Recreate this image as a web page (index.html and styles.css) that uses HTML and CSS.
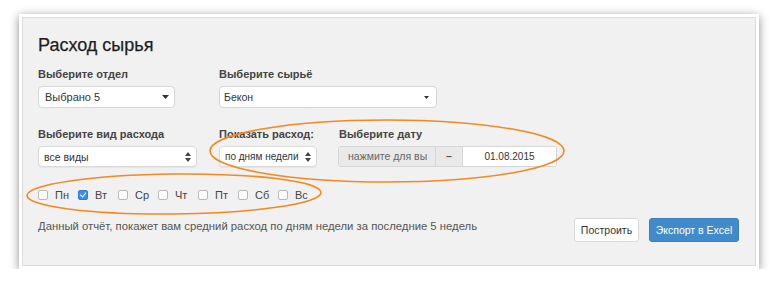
FILE: index.html
```html
<!DOCTYPE html>
<html>
<head>
  <title>Расход сырья</title>
  <meta charset="UTF-8">
  <link rel="stylesheet" href="styles.css">
</head>
<body>
  <div class="window">
    <div class="panel">
      <h1>Расход сырья</h1>

      <div class="row">
        <div class="field col-a">
          <label>Выберите отдел</label>
          <div class="select select-dept">
            <span>Выбрано 5</span>
            <svg class="caret" width="7" height="4" viewBox="0 0 7 4"><path d="M0 0h7L3.5 4z" fill="#333"/></svg>
          </div>
        </div>
        <div class="field">
          <label>Выберите сырьё</label>
          <div class="select select-raw">
            <span>Бекон</span>
            <svg class="caret" width="5" height="3" viewBox="0 0 5 3"><path d="M0 0h5L2.5 3z" fill="#333"/></svg>
          </div>
        </div>
      </div>

      <div class="row row-second">
        <div class="field col-a">
          <label>Выберите вид расхода</label>
          <div class="select native select-kind">
            <span>все виды</span>
            <svg width="6" height="10" viewBox="0 0 6 10"><path d="M0 4L3 0l3 4zM0 6l3 4 3-4z" fill="#444"/></svg>
          </div>
        </div>
        <div class="field col-b">
          <label>Показать расход:</label>
          <div class="select native select-show">
            <span>по дням недели</span>
            <svg width="6" height="10" viewBox="0 0 6 10"><path d="M0 4L3 0l3 4zM0 6l3 4 3-4z" fill="#444"/></svg>
          </div>
        </div>
        <div class="field">
          <label>Выберите дату</label>
          <div class="date-group">
            <div class="addon addon-hint"><span>нажмите для выбора</span></div>
            <div class="addon addon-dash">–</div>
            <div class="date-input">01.08.2015</div>
          </div>
        </div>
      </div>

      <div class="days">
        <label class="day"><span class="box"></span>Пн</label>
        <label class="day"><span class="box checked"></span>Вт</label>
        <label class="day"><span class="box"></span>Ср</label>
        <label class="day"><span class="box"></span>Чт</label>
        <label class="day"><span class="box"></span>Пт</label>
        <label class="day"><span class="box"></span>Сб</label>
        <label class="day"><span class="box"></span>Вс</label>
      </div>

      <div class="footer">
        <p class="note">Данный отчёт, покажет вам средний расход по дням недели за последние 5 недель</p>
        <div class="buttons">
          <button class="btn btn-build">Построить</button>
          <button class="btn btn-primary">Экспорт в Excel</button>
        </div>
      </div>
    </div>
  </div>

  <!-- пометки поверх скриншота -->
  <svg class="marks" width="780" height="286" viewBox="0 0 780 286">
    <ellipse cx="387" cy="151" rx="177" ry="31" />
    <ellipse cx="174" cy="194" rx="147" ry="20" transform="rotate(-0.6 174 194)" />
  </svg>
</body>
</html>
```

FILE: styles.css
```css
body {
  margin: 0;
  background-color: #fff;
  font-family: "Liberation Sans", Arial, sans-serif;
  color: #333;
}

.window {
  margin: 14px 0 0 19px;
  width: 734px;
  height: 249px;
  padding: 3px;
  background-color: #fff;
  box-shadow: 0 2px 9px rgba(0, 0, 0, 0.45);
}

.panel {
  height: 100%;
  box-sizing: border-box;
  padding: 17px 16px 0 15px;
  background-color: #f1f1f1;
  border: 1px solid #dcdcdc;
}

h1 {
  margin: 0;
  font-size: 18px;
  line-height: 20px;
  font-weight: normal;
  color: #1e1e1e;
  -webkit-text-stroke: 0.25px #1e1e1e;
}

.row {
  display: flex;
  margin-top: 12px;
}

.row-second {
  margin-top: 19px;
}

.col-a {
  width: 181px;
}

.col-b {
  width: 120px;
}

.field label {
  display: block;
  margin-bottom: 5px;
  font-size: 11px;
  line-height: 14px;
  font-weight: bold;
  color: #444;
}

.select {
  display: flex;
  align-items: center;
  justify-content: space-between;
  box-sizing: border-box;
  height: 22px;
  padding: 0 5px 0 6px;
  font-size: 11px;
  white-space: nowrap;
  background-color: #fff;
  border: 1px solid #d6d6d6;
  border-radius: 4px;
}

.select-dept {
  width: 137px;
}

.select-raw {
  width: 218px;
  padding: 0 7px 0 4px;
  font-size: 10.5px;
}

.select.native {
  height: 21px;
  padding: 0 5px;
  font-size: 10.5px;
  border-color: #dadada;
  box-shadow: 0 1px 1px rgba(0, 0, 0, 0.05);
}

.select-kind {
  width: 159px;
}

.select.select-show {
  width: 98px;
  font-size: 10px;
}

.date-group {
  display: flex;
  box-sizing: border-box;
  width: 219px;
  height: 21px;
  margin-left: -1px;
  font-size: 10.5px;
  line-height: 19px;
  border: 1px solid #d6d6d6;
  border-radius: 3px;
  overflow: hidden;
}

.addon {
  box-sizing: border-box;
  background-color: #e9e9e9;
  border-right: 1px solid #d6d6d6;
  color: #666;
}

.addon-hint {
  width: 97px;
  padding: 0 8px 0 9px;
}

.addon-hint span {
  display: block;
  white-space: nowrap;
  overflow: hidden;
}

.addon-dash {
  width: 27px;
  text-align: center;
  font-weight: bold;
  color: #555;
}

.date-input {
  flex: 1;
  font-size: 10px;
  text-align: center;
  background-color: #fff;
  color: #333;
}

.days {
  display: flex;
  margin-top: 21px;
  font-size: 11px;
  line-height: 14px;
}

.day {
  display: flex;
  align-items: center;
  width: 40px;
  color: #444;
}

.box {
  position: relative;
  box-sizing: border-box;
  width: 10px;
  height: 10px;
  margin-right: 7px;
  background-color: #fff;
  border: 1px solid #b9b9b9;
  border-radius: 2px;
}

.box.checked {
  background-color: #3c8ef0;
  border-color: #2f7edc;
}

.box.checked::after {
  content: "";
  position: absolute;
  left: 2px;
  top: 0;
  width: 3px;
  height: 5px;
  border-right: 1.5px solid #fff;
  border-bottom: 1.5px solid #fff;
  transform: rotate(40deg);
}

.footer {
  display: flex;
  justify-content: space-between;
  align-items: flex-start;
  margin-top: 16px;
}

.note {
  margin: 0;
  font-size: 11.3px;
  line-height: 16px;
  color: #555;
}

.buttons {
  display: flex;
  gap: 10px;
}

.btn {
  box-sizing: border-box;
  width: 90px;
  height: 24px;
  padding: 0;
  font-family: inherit;
  font-size: 10.5px;
  color: #333;
  background-color: #fff;
  border: 1px solid #d9d9d9;
  border-radius: 3px;
}

.btn-build {
  width: 65px;
}

.btn-primary {
  color: #fff;
  background-color: #428bca;
  border-color: #3b80c0;
}

.marks {
  position: absolute;
  top: 0;
  left: 0;
  pointer-events: none;
}

.marks ellipse {
  fill: none;
  stroke: #f5881f;
  stroke-width: 1.6;
}
```
